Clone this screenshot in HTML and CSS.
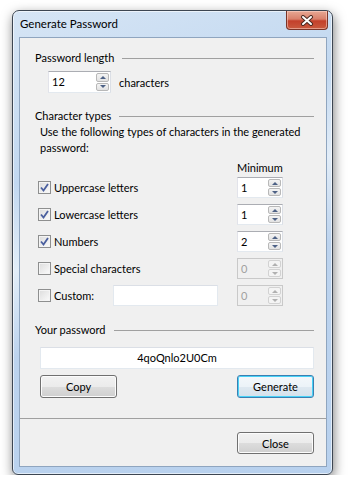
FILE: index.html
```html
<!DOCTYPE html>
<html lang="en">
<head>
    <meta charset="UTF-8">
    <title>Generate Password</title>
    <link rel="stylesheet" href="styles.css">
</head>
<body>
<div class="window">
    <div class="titlebar">
        <span class="title">Generate Password</span>
        <span class="close-x">
            <svg width="14" height="11" viewBox="0 0 14 11">
                <path d="M3 2 L11 9 M11 2 L3 9" stroke="#4a2a22" stroke-width="4" stroke-linecap="round"/>
                <path d="M3 2 L11 9 M11 2 L3 9" stroke="#fff" stroke-width="2" stroke-linecap="round"/>
            </svg>
        </span>
    </div>
    <div class="client">
        <div class="main">
            <div class="group-head"><span>Password length</span></div>
            <div class="length-row">
                <div class="spin spin-wide">
                    <span class="spin-val">12</span>
                    <div class="spin-btns"><span class="up"></span><span class="down"></span></div>
                </div>
                <span>characters</span>
            </div>

            <div class="group-head"><span>Character types</span></div>
            <p class="desc">Use the following types of characters in the generated password:</p>
            <div class="min-head">Minimum</div>

            <div class="type-list">
                <div class="type-row">
                    <span class="check"><svg width="9" height="9" viewBox="0 0 9 9"><path d="M1 4.5 L3.5 7.5 L8 1" fill="none" stroke="#4a5f9e" stroke-width="1.8"/></svg></span>
                    <span class="type-label">Uppercase letters</span>
                    <div class="spin"><span class="spin-val">1</span><div class="spin-btns"><span class="up"></span><span class="down"></span></div></div>
                </div>
                <div class="type-row">
                    <span class="check"><svg width="9" height="9" viewBox="0 0 9 9"><path d="M1 4.5 L3.5 7.5 L8 1" fill="none" stroke="#4a5f9e" stroke-width="1.8"/></svg></span>
                    <span class="type-label">Lowercase letters</span>
                    <div class="spin"><span class="spin-val">1</span><div class="spin-btns"><span class="up"></span><span class="down"></span></div></div>
                </div>
                <div class="type-row">
                    <span class="check"><svg width="9" height="9" viewBox="0 0 9 9"><path d="M1 4.5 L3.5 7.5 L8 1" fill="none" stroke="#4a5f9e" stroke-width="1.8"/></svg></span>
                    <span class="type-label">Numbers</span>
                    <div class="spin"><span class="spin-val">2</span><div class="spin-btns"><span class="up"></span><span class="down"></span></div></div>
                </div>
                <div class="type-row">
                    <span class="check"></span>
                    <span class="type-label">Special characters</span>
                    <div class="spin disabled"><span class="spin-val">0</span><div class="spin-btns"><span class="up"></span><span class="down"></span></div></div>
                </div>
                <div class="type-row">
                    <span class="check"></span>
                    <span class="type-label custom-label">Custom:</span>
                    <div class="textbox custom-box"></div>
                    <div class="spin disabled"><span class="spin-val">0</span><div class="spin-btns"><span class="up"></span><span class="down"></span></div></div>
                </div>
            </div>

            <div class="group-head pw-head"><span>Your password</span></div>
            <div class="textbox pw-box">4qoQnlo2U0Cm</div>
            <div class="btn-row">
                <button class="btn">Copy</button>
                <button class="btn default">Generate</button>
            </div>
        </div>
        <div class="footer">
            <button class="btn">Close</button>
        </div>
    </div>
</div>
</body>
</html>
```

FILE: styles.css
```css
* {
    margin: 0;
    padding: 0;
    box-sizing: border-box;
}

body {
    background: #fff;
    font-family: Lato, "Noto Sans", sans-serif;
    font-size: 11px;
    color: #000;
}

.window {
    width: 321px;
    height: 465px;
    margin: 10px 0 0 12px;
    border: 1px solid #3d4652;
    border-radius: 7px 7px 6px 6px;
    padding: 0 5px 7px 6px;
    background: linear-gradient(160deg, #d6e5f5 0%, #c2d8f0 30%, #e2edf8 45%, #bcd3ee 60%, #b8d1ee 100%);
    box-shadow: 1px 4px 12px rgba(0, 0, 0, .5), inset 0 0 0 1px rgba(255, 255, 255, .6);
}

.titlebar {
    height: 26px;
    display: flex;
    justify-content: space-between;
    align-items: flex-start;
}

.title {
    padding: 5px 0 0 1px;
    line-height: 16px;
    font-size: 11.5px;
}

.close-x {
    width: 42px;
    height: 19px;
    margin-right: -1px;
    border: 1px solid #7a3428;
    border-top: 0;
    border-radius: 0 0 4px 4px;
    background: linear-gradient(#e7a894 0%, #d9806b 45%, #c3402b 55%, #c95a3f 100%);
    box-shadow: inset 0 0 0 1px rgba(255, 220, 210, .5);
    display: flex;
    justify-content: center;
    align-items: center;
}

.client {
    height: 430px;
    border: 1px solid #8fa5bf;
    background: #f0f0f0;
    display: flex;
    flex-direction: column;
}

.main {
    padding: 12px 12px 20px 15px;
}

.group-head {
    height: 16px;
    line-height: 16px;
    display: flex;
    align-items: center;
}

.group-head::after {
    content: "";
    flex: 1;
    height: 1px;
    margin-left: 8px;
    background: #a0a0a0;
}

.length-row {
    margin: 5px 0 15px 13px;
    height: 22px;
    display: flex;
    align-items: center;
    gap: 8px;
}

.spin {
    width: 46px;
    height: 21px;
    background: #fff;
    border: 1px solid #abadb3;
    border-color: #abadb3 #dbdfe6 #e3e9ef #e2e3ea;
    display: flex;
    align-items: stretch;
    padding: 1px;
}

.spin-wide {
    width: 63px;
    height: 22px;
}

.spin-val {
    flex: 1;
    padding-left: 2px;
    line-height: 17px;
}

.spin-btns {
    width: 13px;
    display: flex;
    flex-direction: column;
    gap: 1px;
}

.spin-btns span {
    flex: 1;
    border: 1px solid #b8b8b8;
    border-radius: 2px;
    background: linear-gradient(#f4f4f4, #e2e2e2);
    display: flex;
    justify-content: center;
    align-items: center;
}

.spin-btns .up::before,
.spin-btns .down::before {
    content: "";
    border-left: 3px solid transparent;
    border-right: 3px solid transparent;
}

.spin-btns .up::before {
    border-bottom: 3px solid #4d6185;
}

.spin-btns .down::before {
    border-top: 3px solid #4d6185;
}

.spin.disabled {
    background: #f0f0f0;
    border-color: #c9c9c9;
    color: #a0a0a0;
}

.spin.disabled .spin-btns span {
    border-color: #d2d2d2;
    background: #f4f4f4;
}

.spin.disabled .up::before {
    border-bottom-color: #b0b0b0;
}

.spin.disabled .down::before {
    border-top-color: #b0b0b0;
}

.desc {
    margin-left: 5px;
    line-height: 16px;
}

.min-head {
    margin: 4px 0 1px 202px;
    line-height: 16px;
}

.type-list {
    display: flex;
    flex-direction: column;
    gap: 6px;
}

.type-row {
    height: 21px;
    margin: 0 31px 0 3px;
    display: flex;
    align-items: center;
}

.check {
    width: 13px;
    height: 13px;
    border: 1px solid #8e8f8f;
    background: linear-gradient(135deg, #dcdcdc, #fbfbfb);
    box-shadow: inset 0 0 0 1px #f4f4f4;
    display: flex;
    justify-content: center;
    align-items: center;
}

.type-label {
    margin-left: 3px;
}

.custom-label {
    width: 59px;
}

.textbox {
    background: #fff;
    border: 1px solid #e3e9ef;
    border-top-color: #dbdfe6;
}

.custom-box {
    width: 105px;
    height: 21px;
}

.type-row .spin {
    margin-left: auto;
}

.pw-head {
    margin-top: 16px;
}

.pw-box {
    margin: 9px 0 0 5px;
    height: 22px;
    line-height: 20px;
    text-align: center;
}

.btn-row {
    margin: 6px 0 0 5px;
    display: flex;
    justify-content: space-between;
}

.btn {
    width: 77px;
    height: 23px;
    font: inherit;
    color: #000;
    border: 1px solid #707070;
    border-radius: 3px;
    background: linear-gradient(#f2f2f2 0%, #ebebeb 50%, #dddddd 50%, #cfcfcf 100%);
    box-shadow: inset 0 0 0 1px #fcfcfc;
}

.btn.default {
    border-color: #3c7fb1;
    box-shadow: inset 0 0 0 1px #48d2f7;
    background: linear-gradient(#f4f8fb 0%, #ecf3f8 50%, #dfe9f1 50%, #d4e1eb 100%);
}

.footer {
    flex: 1;
    border-top: 1px solid #a0a0a0;
    padding: 13px 12px 0 0;
    display: flex;
    justify-content: flex-end;
    align-items: flex-start;
}

.footer .btn {
    height: 22px;
}
```
